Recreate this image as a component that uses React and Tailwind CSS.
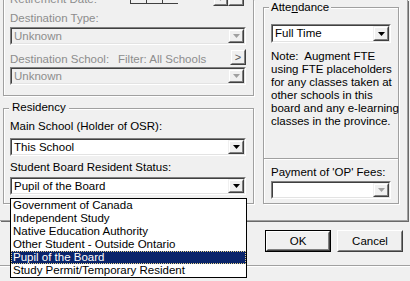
import React from "react";

function Arrow({ disabled }) {
  return (
    <svg width="7" height="4" viewBox="0 0 7 4">
      <path d="M0 0h7L3.5 4z" fill={disabled ? "#a0a0a0" : "#000"} />
    </svg>
  );
}

// classic 3D raised box (scroll/drop buttons)
function Raised({ className = "", children }) {
  return (
    <div className={`border border-t-[#f0f0f0] border-l-[#f0f0f0] border-b-[#404040] border-r-[#404040] ${className}`}>
      <div className="flex h-full w-full items-center justify-center border border-t-white border-l-white border-b-[#808080] border-r-[#808080] bg-[#f0f0f0]">
        {children}
      </div>
    </div>
  );
}

function Combo({ value, disabled, gray, tall }) {
  return (
    <div className={`${tall ? "h-[19px]" : "h-[18px]"} border border-t-[#808080] border-l-[#808080] border-b-white border-r-white`}>
      <div className={`flex h-full border border-t-[#404040] border-l-[#404040] border-b-[#e3e3e3] border-r-[#e3e3e3] ${gray ? "bg-[#f0f0f0]" : "bg-white"}`}>
        <div className={`flex flex-1 items-center pl-[2px] ${disabled ? "text-[#8d8d8d]" : "text-black"}`}>{value}</div>
        <Raised className="h-full w-[16px]">
          <Arrow disabled={disabled} />
        </Raised>
      </div>
    </div>
  );
}

function PushButton({ label, isDefault }) {
  const inner = (
    <div className="h-full w-full border border-t-white border-l-white border-b-[#404040] border-r-[#404040]">
      <div className="flex h-full w-full items-center justify-center border border-t-[#f0f0f0] border-l-[#f0f0f0] border-b-[#808080] border-r-[#808080]">
        {label}
      </div>
    </div>
  );
  return (
    <div className={`h-[22px] w-[66px] ${isDefault ? "border border-black" : ""}`}>{inner}</div>
  );
}

const items = [
  "Government of Canada",
  "Independent Study",
  "Native Education Authority",
  "Other Student - Outside Ontario",
  "Pupil of the Board",
  "Study Permit/Temporary Resident",
];

export default function App() {
  return (
    <div className="relative h-[281px] w-[410px] overflow-hidden bg-[#f0f0f0] font-['Liberation_Sans',Arial,sans-serif] text-[11.5px] leading-[13px] text-black">
      {/* tab page */}
      <div className="flex h-[221px] w-[408px] border-b border-r border-[#a0a0a0] shadow-[1px_1px_0_#696969]">
        {/* left column */}
        <div className="ml-[3px] flex w-[251px] flex-col">
          <div className="flex h-[96px] flex-col border-x border-b border-[#a0a0a0] pl-[6px] pr-[7px] shadow-[inset_1px_0_0_white,1px_1px_0_white]">
            <div className="-mt-[7px] flex h-[13px] items-end text-[#8d8d8d]">
              <span className="w-[120px] shrink-0">Retirement Date:</span>
              <div className="mb-[2px] flex">
                <div className="h-[6px] w-[16px] border-b border-l border-[#404040]" />
                <div className="h-[6px] w-[16px] border-b border-l border-[#404040]" />
                <div className="h-[6px] w-[16px] border-b border-l border-[#404040]" />
              </div>
              <div className="ml-[35px] flex">
                <Raised className="h-[14px] w-[15px]">
                  <Arrow disabled />
                </Raised>
                <Raised className="h-[14px] w-[16px]" />
              </div>
            </div>
            <div className="mt-[6px] text-[#8d8d8d]">Destination Type:</div>
            <div className="mt-[2px]">
              <Combo value="Unknown" disabled gray />
            </div>
            <div className="mt-[4px] flex h-[17px] items-end text-[#8d8d8d]">
              <span className="w-[108px] shrink-0">Destination School:</span>
              <span className="flex-1 whitespace-nowrap">Filter: All Schools</span>
              <Raised className="h-[16px] w-[16px] shrink-0 self-start">
                <span className="text-[11px] leading-[10px] text-[#555]">&gt;</span>
              </Raised>
            </div>
            <div className="mt-[1px]">
              <Combo value="Unknown" disabled gray />
            </div>
          </div>

          <div className="relative mt-[12px] h-[96px] border border-[#a0a0a0] pl-[6px] pr-[7px] pt-[11px] shadow-[inset_1px_1px_0_white,1px_1px_0_white]">
            <span className="absolute -top-[8px] left-[5px] bg-[#f0f0f0] px-[3px]">Residency</span>
            <div>Main School (Holder of OSR):</div>
            <div className="mt-[5px]">
              <Combo value="This School" />
            </div>
            <div className="mt-[5px]">Student Board Resident Status:</div>
            <div className="mt-[3px]">
              <Combo value="Pupil of the Board" />
            </div>
          </div>
        </div>

        {/* right column */}
        <div className="relative ml-[9px] mt-[7px] h-[197px] w-[136px] border border-[#a0a0a0] px-[7px] pt-[16px] shadow-[inset_1px_1px_0_white,1px_1px_0_white]">
          <span className="absolute -top-[7px] left-[5px] bg-[#f0f0f0] px-[2px]">
            Atte<u>n</u>dance
          </span>
          <Combo value="Full Time" tall />
          <p className="mt-[7px] whitespace-pre">
            {"Note:  Augment FTE\nusing FTE placeholders\nfor any classes taken at\nother schools in this\nboard and any e-learning\nclasses in the province."}
          </p>
          <div className="-mx-[7px] mt-[30px] h-[2px] border-t border-b border-t-[#a0a0a0] border-b-white" />
          <div className="mt-[6px]">Payment of 'OP' Fees:</div>
          <div className="mt-[2px]">
            <Combo value="" disabled />
          </div>
        </div>
      </div>

      {/* dialog buttons */}
      <div className="mt-[9px] flex justify-end gap-[6px] pr-[7px]">
        <PushButton label="OK" isDefault />
        <PushButton label="Cancel" />
      </div>
      <div className="mt-[13px] h-[2px] border-t border-b border-t-[#a0a0a0] border-b-white" />

      {/* open dropdown list */}
      <div className="absolute left-[10px] top-[198px] w-[237px] border border-black bg-white">
        {items.map((t) => (
          <div
            key={t}
            className={`h-[13px] whitespace-nowrap pl-[2px] leading-[13px] ${
              t === "Pupil of the Board"
                ? "bg-[#0a246a] text-white outline-1 -outline-offset-1 outline-dotted outline-[#e8d48a]"
                : "text-black"
            }`}
          >
            {t}
          </div>
        ))}
      </div>
    </div>
  );
}
